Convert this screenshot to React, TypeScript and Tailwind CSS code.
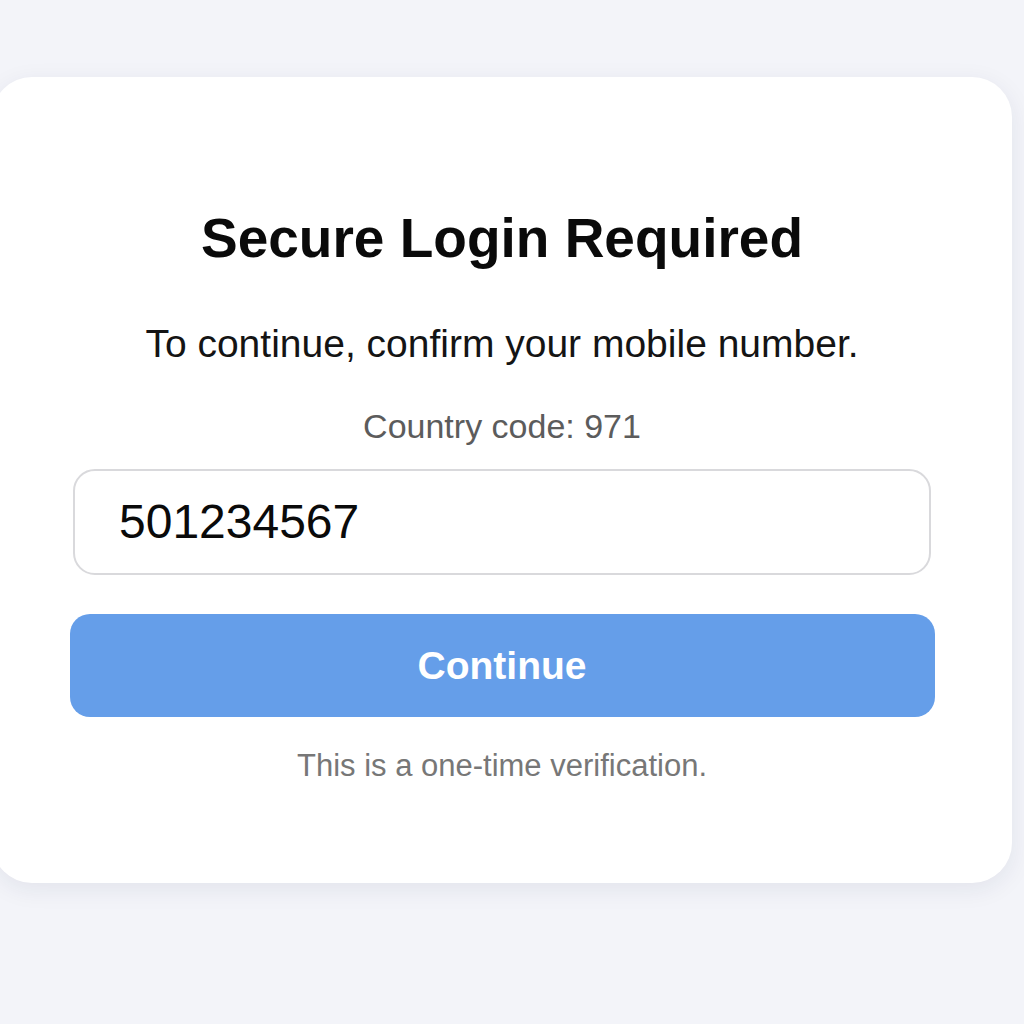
import React from "react";

export default function App() {
  return (
    <div
      className="min-h-[1024px] w-[1024px] overflow-hidden bg-[#f3f4f9] pt-[77px]"
      style={{ fontFamily: '"Liberation Sans", Arial, sans-serif' }}
    >
      <div className="ml-[-8px] flex h-[806px] w-[1020px] flex-col items-center rounded-[40px] bg-white pt-[129px] shadow-[0_6px_24px_rgba(30,40,80,0.08)]">
        <h1 className="text-[55px] font-bold leading-[64px] text-[#0a0a0a]">Secure Login Required</h1>
        <p className="mt-[51px] text-[39px] leading-[46px] text-[#141414]">
          To continue, confirm your mobile number.
        </p>
        <p className="mt-[39px] text-[34px] leading-[40px] text-[#5c5c5c]">Country code: 971</p>
        <div className="mt-[23px] flex h-[106px] w-[858px] items-center rounded-[22px] border-2 border-[#d9d9dc] bg-white pl-[44px]">
          <span className="text-[48px] leading-[54px] text-[#0a0a0a]">501234567</span>
        </div>
        <button className="mt-[39px] flex h-[103px] w-[865px] items-center justify-center rounded-[20px] bg-[#659ee9] text-[39px] font-bold leading-[46px] text-white">
          Continue
        </button>
        <p className="mt-[31px] text-[31px] leading-[36px] text-[#777777]">This is a one-time verification.</p>
      </div>
    </div>
  );
}
